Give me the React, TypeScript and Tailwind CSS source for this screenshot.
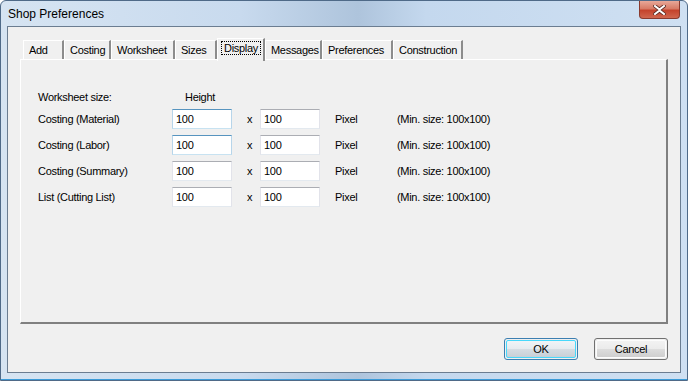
import { useState } from "react";

const TABS = [
  { name: "Add", width: "w-[41px]" },
  { name: "Costing", width: "w-[47px]" },
  { name: "Worksheet", width: "w-[64px]" },
  { name: "Sizes", width: "w-[42px]" },
  { name: "Display", width: "w-[48px]" },
  { name: "Messages", width: "w-[57px]" },
  { name: "Preferences", width: "w-[71px]" },
  { name: "Construction", width: "w-[70px]" },
];

const ROWS = [
  { label: "Costing (Material)", hot: true },
  { label: "Costing (Labor)", hot: true },
  { label: "Costing (Summary)", hot: false },
  { label: "List (Cutting List)", hot: false },
];

const TextBox = ({ value, hot }: { value: string; hot: boolean }) => {
  return (
    <div
      className={
        hot
          ? "w-[60px] h-[20px] bg-white border border-[#b7d5ea] border-t-[#5794bf] border-b-[#c7e2f1] pl-[3px] leading-[18px]"
          : "w-[60px] h-[20px] bg-white border border-[#e2e3ea] border-t-[#abadb3] border-b-[#e3e9ef] pl-[3px] leading-[18px]"
      }
    >
      {value}
    </div>
  );
};

const Button = ({ label, primary }: { label: string; primary?: boolean }) => {
  return (
    <div
      className={
        primary
          ? "w-[74px] h-[22px] rounded-[3px] border border-[#3c7fb1] p-px"
          : "w-[74px] h-[22px] rounded-[3px] border border-[#707070] p-px"
      }
    >
      <div
        className={
          primary
            ? "w-full h-full rounded-[2px] border border-[#48d8fb] bg-[linear-gradient(#f0f4f7_0%,#e6ebef_50%,#d6dde3_50%,#c8d0d7_100%)] flex items-center justify-center"
            : "w-full h-full rounded-[2px] border border-[#fcfcfc] bg-[linear-gradient(#f2f2f2_0%,#ebebeb_50%,#dddddd_50%,#cfcfcf_100%)] flex items-center justify-center"
        }
      >
        {label}
      </div>
    </div>
  );
};

export default function App() {
  const [active] = useState("Display");

  return (
    <div className="w-[688px] h-[381px] flex flex-col bg-[linear-gradient(90deg,#d6e4f2_0%,#c8daee_35%,#aec4dc_52%,#c4d8ee_62%,#cfe0f2_100%)] rounded-t-[6px] border border-[#4f6a88] font-['Liberation_Sans',Arial,sans-serif] text-[11px] tracking-[-0.3px] text-black overflow-hidden">
      <div className="h-[25px] flex items-center justify-between pl-[7px] pr-[7px] shrink-0">
        <span className="text-[12px] tracking-normal pt-[1px]">Shop Preferences</span>
        <div className="self-start w-[41px] h-[18px] rounded-b-[4px] border border-t-0 border-[#8a3a2e] bg-[linear-gradient(#e8a898_0%,#d77b66_45%,#c4432c_55%,#d0664e_100%)] flex items-center justify-center">
          <svg width="13" height="10" viewBox="0 0 13 10">
            <path
              d="M2 1 L6.5 4.5 L11 1 M2 9 L6.5 5.5 L11 9"
              stroke="#5b2a22"
              strokeWidth="3.6"
              strokeLinecap="square"
              fill="none"
            />
            <path
              d="M2 1 L6.5 4.5 L11 1 M2 9 L6.5 5.5 L11 9"
              stroke="#ffffff"
              strokeWidth="2"
              strokeLinecap="square"
              fill="none"
            />
          </svg>
        </div>
      </div>

      <div className="flex-1 px-[6px] pb-[6px] border-b border-[#3b9bd8]">
        <div className="h-full border border-[#6b7d91] bg-[#f0f0f0] flex flex-col">
          {/* tabs */}
          <div className="mt-[11px] ml-[15px] h-[21px] flex items-end relative z-10">
            {TABS.map((tab) => {
              const selected = tab.name === active;
              return (
                <div
                  key={tab.name}
                  className={
                    selected
                      ? `${tab.width} h-[23px] -mb-[2px] bg-[#f0f0f0] border-l border-t border-white border-r-2 border-r-[#8c8c8c] pl-[4px] pt-[1px]`
                      : `${tab.width} h-[19px] bg-[#f0f0f0] border-l border-t border-white border-r-2 border-r-[#8c8c8c] pl-[5px] pt-[1px]`
                  }
                >
                  <span
                    className={
                      selected
                        ? "outline outline-1 outline-dotted outline-black px-[2px]"
                        : ""
                    }
                  >
                    {tab.name}
                  </span>
                </div>
              );
            })}
          </div>

          {/* panel */}
          <div className="mx-[12px] h-[265px] border-l border-t border-white border-r-2 border-b-2 border-r-[#808080] border-b-[#808080] pt-[28px] pl-[17px]">
            <div className="h-[18px] flex items-center">
              <div className="w-[147px]">Worksheet size:</div>
              <div>Height</div>
            </div>
            {ROWS.map((row) => (
              <div key={row.label} className="h-[26px] flex items-center">
                <div className="w-[134px]">{row.label}</div>
                <TextBox value="100" hot={row.hot} />
                <div className="w-[28px] pl-[15px]">x</div>
                <TextBox value="100" hot={false} />
                <div className="w-[77px] pl-[15px]">Pixel</div>
                <div>(Min. size: 100x100)</div>
              </div>
            ))}
          </div>

          {/* buttons */}
          <div className="mt-[14px] mr-[12px] flex justify-end gap-[16px]">
            <Button label="OK" primary />
            <Button label="Cancel" />
          </div>
        </div>
      </div>
    </div>
  );
}
